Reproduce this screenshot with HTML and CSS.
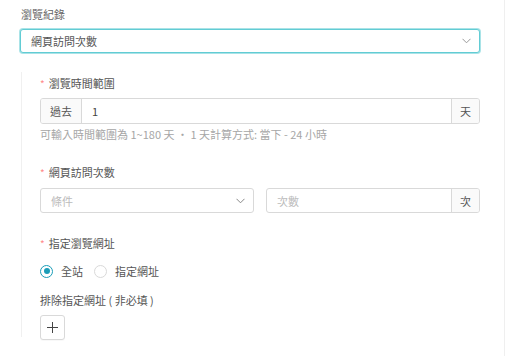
FILE: index.html
```html
<!DOCTYPE html>
<html lang="zh-Hant">
<head>
<meta charset="utf-8">
<link rel="stylesheet" href="styles.css">
</head>
<body>
<div class="page">
  <div class="title">瀏覽紀錄</div>
  <div class="select focused">
    <span class="value">網頁訪問次數</span>
    <svg class="chev" width="9" height="6" viewBox="0 0 9 6"><path d="M0.5 0.8 L4.5 4.8 L8.5 0.8" fill="none" stroke="#999" stroke-width="1"/></svg>
  </div>
  <div class="section">
    <div class="label"><span class="req">*</span>瀏覽時間範圍</div>
    <div class="group g1">
      <span class="addon left">過去</span>
      <span class="field">1</span>
      <span class="addon right">天</span>
    </div>
    <div class="help">可輸入時間範圍為 1~180 天 · 1 天計算方式: 當下 - 24 小時</div>

    <div class="label l2"><span class="req">*</span>網頁訪問次數</div>
    <div class="row">
      <div class="select">
        <span class="placeholder">條件</span>
        <svg class="chev" width="9" height="6" viewBox="0 0 9 6"><path d="M0.5 0.8 L4.5 4.8 L8.5 0.8" fill="none" stroke="#888" stroke-width="1"/></svg>
      </div>
      <div class="group">
        <span class="field placeholder">次數</span>
        <span class="addon right">次</span>
      </div>
    </div>

    <div class="label l3"><span class="req">*</span>指定瀏覽網址</div>
    <div class="radios">
      <label class="radio"><span class="circle checked"></span><span>全站</span></label>
      <label class="radio"><span class="circle"></span><span>指定網址</span></label>
    </div>
    <div class="plain">排除指定網址 ( 非必填 )</div>
    <button class="plus" type="button">
      <svg width="11" height="11" viewBox="0 0 11 11"><path d="M5.5 0 V11 M0 5.5 H11" stroke="#444" stroke-width="1"/></svg>
    </button>
  </div>
</div>
</body>
</html>
```
FILE: styles.css
```css
* { box-sizing: border-box; }
html, body { margin: 0; padding: 0; background: #fff; }
body {
  font-family: "Noto Sans CJK TC", "Noto Sans", sans-serif;
  font-size: 11px;
  color: #555;
}
.page {
  width: 505px;
  height: 356px;
  border-right: 1px solid #efefef;
  padding: 6px 24px 0 21px;
}
.title {
  line-height: 16px;
  color: #666;
  margin-bottom: 7px;
}
.select {
  position: relative;
  height: 25px;
  border: 1px solid #d9d9d9;
  border-radius: 3px;
  display: flex;
  align-items: center;
  padding: 0 8px 0 10px;
  background: #fff;
}
.page > .select { margin-left: -1px; }
.select.focused {
  height: 24px;
  border-color: #62ccd4;
  box-shadow: 0 0 0 1px rgba(98, 204, 212, 0.55);
}
.select .value, .select .placeholder { flex: 1; line-height: 16px; }
.select .value { color: #555; }
.placeholder { color: #bbb; }
.chev { flex: none; }
.section {
  margin-top: 19px;
  border-left: 1px solid #f0f0f0;
  padding: 3px 0 0 18px;
  height: 265px;
}
.label {
  line-height: 16px;
  color: #555;
  margin-bottom: 6px;
}
.req {
  color: #ff8a8a;
  font-size: 10px;
  margin-right: 4px;
}
.l2 { margin-top: 22px; margin-bottom: 7px; }
.l3 { margin-top: 22px; margin-bottom: 11px; }
.group {
  display: flex;
  height: 26px;
  border: 1px solid #d9d9d9;
  border-radius: 3px;
  overflow: hidden;
}
.addon {
  flex: none;
  display: flex;
  align-items: center;
  justify-content: center;
  background: #fafafa;
  color: #555;
}
.addon.left { width: 41px; border-right: 1px solid #d9d9d9; }
.addon.right { width: 28px; border-left: 1px solid #d9d9d9; }
.field {
  flex: 1;
  display: flex;
  align-items: center;
  padding-left: 10px;
  color: #444;
}
.field.placeholder { color: #bbb; }
.help {
  margin-top: 2px;
  line-height: 16px;
  color: #a6a6a6;
}
.row {
  display: grid;
  grid-template-columns: 1fr 1fr;
  gap: 12px;
}
.row .group { height: 25px; }
.radios {
  display: flex;
  gap: 11px;
  line-height: 16px;
}
.radio {
  display: flex;
  align-items: center;
  gap: 8px;
  color: #555;
}
.circle {
  width: 13px;
  height: 13px;
  border-radius: 50%;
  border: 1px solid #d9d9d9;
  background: #fff;
  position: relative;
}
.circle.checked { border-color: #1a9db8; }
.circle.checked::after {
  content: "";
  position: absolute;
  left: 2.5px;
  top: 2.5px;
  width: 6px;
  height: 6px;
  border-radius: 50%;
  background: #1a9db8;
}
.plain {
  margin-top: 13px;
  line-height: 16px;
  color: #555;
}
.plus {
  margin-top: 7px;
  width: 25px;
  height: 25px;
  padding: 0;
  border: 1px solid #d9d9d9;
  border-radius: 3px;
  background: #fff;
  display: flex;
  align-items: center;
  justify-content: center;
  box-shadow: 0 1px 1px rgba(0,0,0,0.03);
}
```
